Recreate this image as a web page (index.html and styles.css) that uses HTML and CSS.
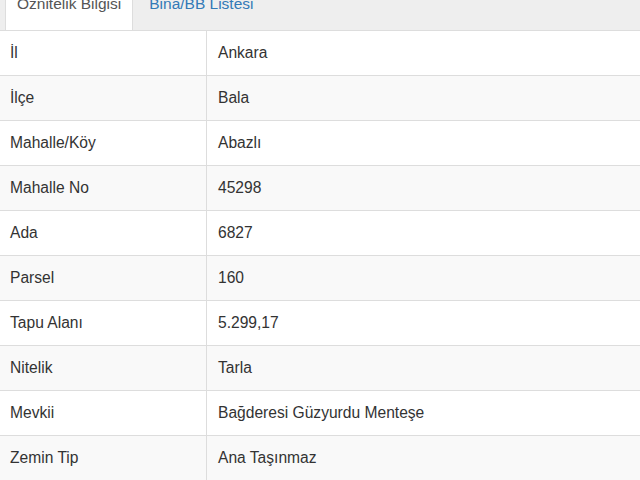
FILE: index.html
```html
<!DOCTYPE html>
<html lang="tr">
<head>
<meta charset="utf-8">
<link rel="stylesheet" href="styles.css">
</head>
<body>
<div class="tabs">
  <div class="tab active">Öznitelik Bilgisi</div>
  <div class="tab link">Bina/BB Listesi</div>
</div>
<table class="attr">
  <tbody>
    <tr><td class="key">İl</td><td>Ankara</td></tr>
    <tr><td class="key">İlçe</td><td>Bala</td></tr>
    <tr><td class="key">Mahalle/Köy</td><td>Abazlı</td></tr>
    <tr><td class="key">Mahalle No</td><td>45298</td></tr>
    <tr><td class="key">Ada</td><td>6827</td></tr>
    <tr><td class="key">Parsel</td><td>160</td></tr>
    <tr><td class="key">Tapu Alanı</td><td>5.299,17</td></tr>
    <tr><td class="key">Nitelik</td><td>Tarla</td></tr>
    <tr><td class="key">Mevkii</td><td>Bağderesi Güzyurdu Menteşe</td></tr>
    <tr><td class="key">Zemin Tip</td><td>Ana Taşınmaz</td></tr>
  </tbody>
</table>
</body>
</html>
```
FILE: styles.css
```css
html, body {
  margin: 0;
  padding: 0;
  background: #fff;
  font-family: "Liberation Sans", Arial, sans-serif;
  color: #333;
}
.tabs {
  display: flex;
  align-items: flex-start;
  height: 30px;
  overflow: hidden;
  padding-left: 5px;
  background: #eee;
  border-bottom: 1px solid #ddd;
}
.tab {
  margin-top: -6px;
  height: 36px;
  padding: 0 11px;
  line-height: 20px;
  font-size: 15.5px;
  box-sizing: border-box;
  border-left: 1px solid transparent;
  border-right: 1px solid transparent;
}
.tab.active {
  background: #fff;
  border-left-color: #ddd;
  border-right-color: #ddd;
  color: #555;
}
.tab.link {
  margin-left: 4px;
  color: #337ab7;
}
.attr {
  width: 100%;
  border-collapse: collapse;
  font-size: 15.6px;
}
.attr td {
  height: 44px;
  padding: 0 11px;
  border-bottom: 1px solid #ddd;
  vertical-align: middle;
}
.attr td.key {
  width: 185px;
  padding-left: 10px;
  border-right: 1px solid #ddd;
}
.attr tr:nth-child(even) td {
  background: #f9f9f9;
}
```
